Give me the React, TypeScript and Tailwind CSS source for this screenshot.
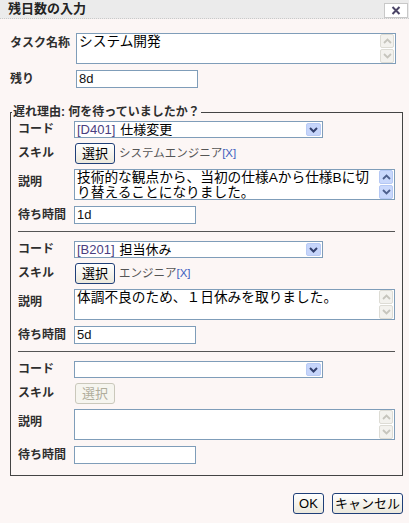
import type { ReactNode } from 'react'

const font = "font-['Liberation_Sans','Noto_Sans_CJK_JP',sans-serif]"

function Arrow({ dir, on }: { dir: 'up' | 'down'; on: boolean }) {
  return (
    <div
      className={`w-[14px] h-[14px] rounded-[2px] border flex items-center justify-center ${
        on ? 'bg-[#c9d8fc] border-[#b5c8f4]' : 'bg-[#f3f2ee] border-[#dddcd5]'
      }`}
    >
      <svg width="9" height="6" viewBox="0 0 9 6">
        <path
          d={dir === 'up' ? 'M1 5L4.5 1.5L8 5' : 'M1 1L4.5 4.5L8 1'}
          stroke={on ? '#4d5f8c' : '#c6c5bd'}
          strokeWidth="1.8"
          fill="none"
        />
      </svg>
    </div>
  )
}

function TextBox({ lines, w, on }: { lines: string[]; w: string; on: boolean }) {
  return (
    <div className={`flex h-[31px] ${w} border border-[#7f9db9] bg-white`}>
      <div className="flex-1 px-[2px] text-[13.7px] leading-[15px] text-black whitespace-nowrap overflow-hidden">
        {lines.map((l) => (
          <div key={l}>{l}</div>
        ))}
      </div>
      <div className="flex flex-col gap-[1px] pr-[1px]">
        <Arrow dir="up" on={on} />
        <Arrow dir="down" on={on} />
      </div>
    </div>
  )
}

function Input({ value, w }: { value: string; w: string }) {
  return (
    <div className={`h-[18px] ${w} border border-[#7f9db9] bg-white px-[2px] text-[13px] leading-[16px] text-[#111]`}>
      {value}
    </div>
  )
}

function Select({ code, name }: { code?: string; name?: string }) {
  return (
    <div className="flex items-center h-[17px] w-[249px] border border-[#7f9db9] bg-white pl-[2px] text-[13px] leading-[15px]">
      {code && <span className="text-[#4a3d80]">{code}</span>}
      {name && <span className="ml-[5px] text-black">{name}</span>}
      <div className="ml-auto mr-[1px] w-[15px] h-[13px] rounded-[2px] border border-[#b9cbf5] bg-[#c6d5fb] flex items-center justify-center">
        <svg width="9" height="6" viewBox="0 0 9 6">
          <path d="M1 1L4.5 4.5L8 1" stroke="#33406e" strokeWidth="2" fill="none" />
        </svg>
      </div>
    </div>
  )
}

function XpButton({ children, disabled, w }: { children: ReactNode; disabled?: boolean; w: string }) {
  return (
    <button
      className={`h-[21px] ${w} flex items-center justify-center rounded-[3px] border text-[13px] leading-none ${
        disabled
          ? 'border-[#cac8bb] text-[#b0ad9c] bg-[#f6f5ef]'
          : 'border-[#1f3f78] text-black bg-linear-to-b from-white to-[#ebe8dc]'
      }`}
    >
      {children}
    </button>
  )
}

function Label({ children, w }: { children: ReactNode; w: string }) {
  return <div className={`${w} shrink-0 text-[12px] font-bold leading-[15px] text-[#2e2e2e]`}>{children}</div>
}

type Reason = {
  code?: string
  name?: string
  skill?: string
  lines: string[]
  wait: string
}

const reasons: Reason[] = [
  {
    code: '[D401]',
    name: '仕様変更',
    skill: 'システムエンジニア',
    lines: ['技術的な観点から、当初の仕様Aから仕様Bに切', 'り替えることになりました。'],
    wait: '1d',
  },
  {
    code: '[B201]',
    name: '担当休み',
    skill: 'エンジニア',
    lines: ['体調不良のため、１日休みを取りました。'],
    wait: '5d',
  },
  { lines: [], wait: '' },
]

function ReasonGroup({ r, last }: { r: Reason; last: boolean }) {
  const filled = !!r.code
  return (
    <div>
      <div className="flex items-center">
        <Label w="w-[56px]">コード</Label>
        <Select code={r.code} name={r.name} />
      </div>
      <div className="flex items-center mt-[5px]">
        <Label w="w-[57px]">スキル</Label>
        <XpButton w="w-[40px]" disabled={!filled}>
          選択
        </XpButton>
        {r.skill && (
          <span className="ml-[4px] text-[11.5px] text-[#555]">
            {r.skill}
            <span className="text-[#3f5fc0]">[X]</span>
          </span>
        )}
      </div>
      <div className="flex items-start mt-[5px]">
        <Label w="w-[56px] pt-[6px]">説明</Label>
        <TextBox lines={r.lines} w="w-[321px]" on={r.lines.length > 1} />
      </div>
      <div className="flex items-center mt-[6px]">
        <Label w="w-[56px]">待ち時間</Label>
        <Input value={r.wait} w="w-[122px]" />
      </div>
      {!last && <div className="mt-[7px] mb-[9px] h-px bg-[#555]" />}
    </div>
  )
}

export default function App() {
  return (
    <div className={`w-[409px] h-[523px] flex flex-col bg-[#fcf6f5] ${font}`}>
      <div className="h-[19px] flex items-center justify-between pl-[8px] pr-[1px] bg-[#ebebeb] border-b border-dotted border-[#c9c9c9]">
        <span className="text-[13px] font-bold text-[#222]">残日数の入力</span>
        <div className="w-[24px] h-[15px] mt-[2px] border border-[#c8c8c8] bg-white flex items-center justify-center">
          <svg width="10" height="9" viewBox="0 0 10 9">
            <path d="M1.5 1L8.5 8M8.5 1L1.5 8" stroke="#4a4466" strokeWidth="2" />
          </svg>
        </div>
      </div>

      <div className="pl-[10px] pt-[14px]">
        <div className="flex items-start">
          <Label w="w-[66px] pt-[3px]">タスク名称</Label>
          <TextBox lines={['システム開発']} w="w-[320px]" on={false} />
        </div>
        <div className="flex items-center mt-[6px]">
          <Label w="w-[66px]">残り</Label>
          <Input value="8d" w="w-[122px]" />
        </div>
      </div>

      <fieldset className="ml-[10px] mt-[17px] w-[393px] border border-[#444] px-[7px] pt-[1px] pb-[11px]">
        <legend className="-ml-[6px] px-[1px] text-[12px] font-bold leading-[15px] text-[#2e2e2e]">
          遅れ理由: 何を待っていましたか？
        </legend>
        {reasons.map((r, i) => (
          <ReasonGroup key={i} r={r} last={i === reasons.length - 1} />
        ))}
      </fieldset>

      <div className="flex justify-end gap-[8px] pr-[6px] mt-[17px]">
        <XpButton w="w-[31px]">OK</XpButton>
        <XpButton w="w-[71px]">キャンセル</XpButton>
      </div>
    </div>
  )
}
